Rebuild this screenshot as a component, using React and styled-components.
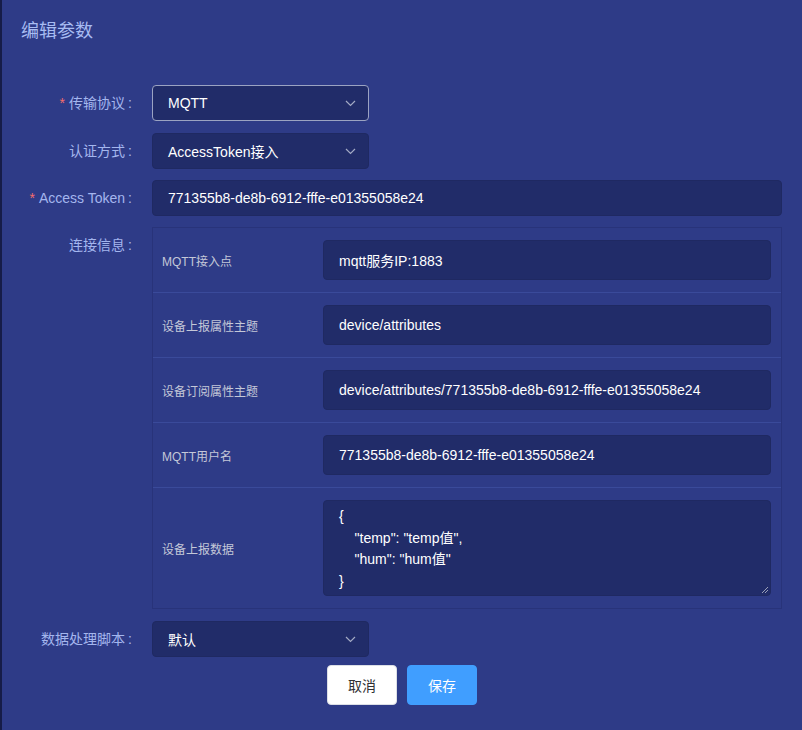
import React from 'react';
import styled, { createGlobalStyle } from 'styled-components';

const GlobalStyle = createGlobalStyle`
  html, body {
    margin: 0;
    padding: 0;
    background: #161c48;
  }
  body {
    font-family: "Liberation Sans", Arial, "Noto Sans CJK SC", sans-serif;
  }
  * {
    box-sizing: border-box;
  }
`;

const Dialog = styled.div`
  margin-left: 2px;
  width: 800px;
  height: 730px;
  background: #2e3b87;
  padding: 20px 20px 0 19px;
`;

const Title = styled.div`
  font-size: 18px;
  line-height: 22px;
  color: #a8bcf2;
`;

const Form = styled.div`
  display: flex;
  flex-direction: column;
  gap: 11px;
  margin-top: 43px;
`;

const Item = styled.div`
  display: flex;
  align-items: flex-start;
  margin-top: ${({ shift }) => shift || 0}px;
`;

const Label = styled.div`
  width: 131px;
  flex-shrink: 0;
  padding-right: 20px;
  text-align: right;
  font-size: 14px;
  line-height: 36px;
  color: #a4b6ee;
  white-space: nowrap;
  &::before {
    content: ${({ required }) => (required ? "'*'" : 'none')};
    color: #f56c6c;
    margin-right: 4px;
  }
  &::after {
    content: ':';
    display: inline-block;
    box-sizing: border-box;
    width: 7px;
    text-align: left;
    padding-left: 3px;
  }
`;

const Field = styled.div`
  flex: 1;
  min-width: 0;
`;

const Select = styled.div`
  position: relative;
  width: 217px;
  height: 36px;
  display: flex;
  align-items: center;
  padding: 0 15px;
  background: #212c69;
  border: 1px solid ${({ focused }) => (focused ? '#9ba3c2' : '#1f2962')};
  border-radius: 4px;
  color: #ffffff;
  font-size: 14px;
`;

const Arrow = styled.svg`
  position: absolute;
  right: 12px;
  top: 50%;
  margin-top: -3px;
  width: 11px;
  height: 7px;
`;

const Input = styled.div`
  height: ${({ h }) => h || 36}px;
  display: flex;
  align-items: center;
  padding: 0 15px;
  background: #212c69;
  border: 1px solid #1f2962;
  border-radius: 4px;
  color: #ffffff;
  font-size: 14px;
  white-space: nowrap;
`;

const Textarea = styled.div`
  position: relative;
  height: 96px;
  padding: 5px 15px;
  background: #212c69;
  border: 1px solid #1f2962;
  border-radius: 4px;
  color: #ffffff;
  font-size: 14px;
  line-height: 21.5px;
  white-space: pre;
`;

const Grip = styled.svg`
  position: absolute;
  right: 1px;
  bottom: 1px;
  width: 8px;
  height: 8px;
`;

const Panel = styled.div`
  border: 1px solid #28337a;
  background: #2e3b87;
`;

const PanelRow = styled.div`
  display: flex;
  align-items: center;
  padding: 12px 10px 12px 9px;
  & + & {
    border-top: 1px solid #3a4a9a;
  }
`;

const PanelLabel = styled.div`
  width: 161px;
  flex-shrink: 0;
  font-size: 12px;
  color: #c4c8d8;
`;

const Buttons = styled.div`
  display: flex;
  justify-content: center;
  gap: 10px;
  margin: 8px 0 0 -19px;
  width: 800px;
`;

const Button = styled.button`
  width: 70px;
  height: 40px;
  border-radius: 4px;
  font-family: inherit;
  font-size: 14px;
  cursor: pointer;
  border: 1px solid ${({ primary }) => (primary ? '#409eff' : '#dcdfe6')};
  background: ${({ primary }) => (primary ? '#409eff' : '#ffffff')};
  color: ${({ primary }) => (primary ? '#ffffff' : '#303133')};
`;

const TOKEN = '771355b8-de8b-6912-fffe-e01355058e24';

const Chevron = () => (
  <Arrow viewBox='0 0 11 7'>
    <path d='M1 1 L5.5 5.5 L10 1' fill='none' stroke='#a3aac4' strokeWidth='1.2' />
  </Arrow>
);

const SelectBox = ({ value, focused }) => (
  <Select focused={focused}>
    {value}
    <Chevron />
  </Select>
);

const rows = [
  { label: 'MQTT接入点', value: 'mqtt服务IP:1883' },
  { label: '设备上报属性主题', value: 'device/attributes' },
  { label: '设备订阅属性主题', value: `device/attributes/${TOKEN}` },
  { label: 'MQTT用户名', value: TOKEN },
];

const sample = '{\n    "temp": "temp值",\n    "hum": "hum值"\n}';

export default function App() {
  return (
    <>
      <GlobalStyle />
      <Dialog>
        <Title>编辑参数</Title>
        <Form>
          <Item>
            <Label required>传输协议</Label>
            <Field><SelectBox value='MQTT' focused /></Field>
          </Item>
          <Item shift={1}>
            <Label>认证方式</Label>
            <Field><SelectBox value='AccessToken接入' /></Field>
          </Item>
          <Item>
            <Label required>Access Token</Label>
            <Field><Input>{TOKEN}</Input></Field>
          </Item>
          <Item>
            <Label>连接信息</Label>
            <Field>
              <Panel>
                {rows.map((row) => (
                  <PanelRow key={row.label}>
                    <PanelLabel>{row.label}</PanelLabel>
                    <Field><Input h={40}>{row.value}</Input></Field>
                  </PanelRow>
                ))}
                <PanelRow>
                  <PanelLabel>设备上报数据</PanelLabel>
                  <Field>
                    <Textarea>
                      {sample}
                      <Grip viewBox='0 0 8 8'>
                        <path d='M7 1 L1 7 M7 4 L4 7' stroke='#9aa0b8' strokeWidth='1' />
                      </Grip>
                    </Textarea>
                  </Field>
                </PanelRow>
              </Panel>
            </Field>
          </Item>
          <Item shift={1}>
            <Label>数据处理脚本</Label>
            <Field><SelectBox value='默认' /></Field>
          </Item>
        </Form>
        <Buttons>
          <Button>取消</Button>
          <Button primary>保存</Button>
        </Buttons>
      </Dialog>
    </>
  );
}
